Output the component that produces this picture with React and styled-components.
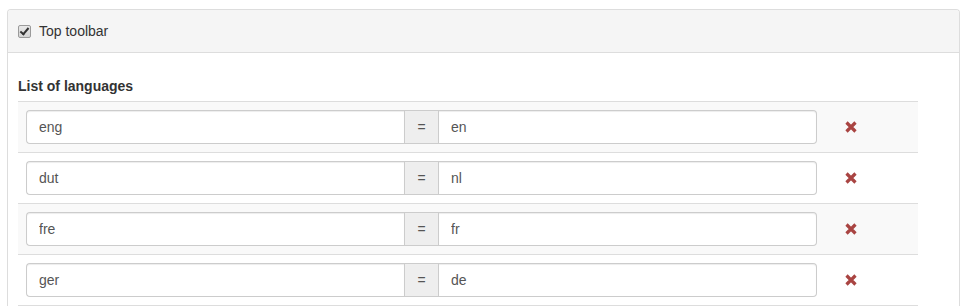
import React from 'react';
import styled, { createGlobalStyle } from 'styled-components';

const GlobalStyle = createGlobalStyle`
  body {
    margin: 0;
    background: #fff;
    font-family: "Liberation Sans", Arial, sans-serif;
    font-size: 14px;
    color: #333;
  }
`;

const Page = styled.div`
  padding: 9px 8px 0 7px;
`;

const Panel = styled.div`
  border: 1px solid #ddd;
  border-radius: 4px 4px 0 0;
  border-bottom: none;
  background: #fff;
`;

const PanelHeading = styled.div`
  display: flex;
  align-items: center;
  gap: 8px;
  padding: 11px 10px 11px 10px;
  line-height: 20px;
  background: #f5f5f5;
  border-bottom: 1px solid #ddd;
  border-radius: 3px 3px 0 0;
`;

const Check = styled.input`
  appearance: none;
  margin: 0;
  width: 13px;
  height: 13px;
  box-sizing: border-box;
  border: 1px solid #9a9a9a;
  border-radius: 2px;
  background: linear-gradient(#e8e8e8, #d4d4d4);
  position: relative;

  &:checked::after {
    content: '';
    position: absolute;
    left: 3px;
    top: 0px;
    width: 3px;
    height: 7px;
    border: solid #333;
    border-width: 0 2px 2px 0;
    transform: rotate(40deg);
  }
`;

const PanelBody = styled.div`
  padding: 23px 10px 0 10px;
`;

const Label = styled.div`
  font-weight: bold;
  line-height: 20px;
  margin-bottom: 5px;
`;

const Table = styled.table`
  width: 900px;
  border-collapse: collapse;
  border-spacing: 0;
  border-bottom: 1px solid #ddd;
`;

const Row = styled.tr`
  background: ${(p) => (p.$striped ? '#f9f9f9' : 'transparent')};
`;

const Cell = styled.td`
  padding: 8px;
  border-top: 1px solid #ddd;
  vertical-align: middle;
  width: ${(p) => p.$width || 'auto'};
`;

const InputGroup = styled.div`
  display: flex;
  height: 34px;
`;

const Field = styled.input`
  flex: 1;
  min-width: 0;
  height: 34px;
  box-sizing: border-box;
  padding: 6px 12px;
  font-family: "Liberation Sans", Arial, sans-serif;
  font-size: 14px;
  color: #555;
  background: #fff;
  border: 1px solid #ccc;
  border-radius: ${(p) => (p.$side === 'left' ? '4px 0 0 4px' : '0 4px 4px 0')};
  ${(p) => (p.$side === 'left' ? 'border-right: 0;' : 'border-left: 0;')}
  box-shadow: inset 0 1px 1px rgba(0, 0, 0, 0.075);
  outline: none;
`;

const Addon = styled.span`
  width: 35px;
  box-sizing: border-box;
  display: flex;
  align-items: center;
  justify-content: center;
  background: #eee;
  border: 1px solid #ccc;
  color: #555;
  font-size: 14px;
`;

const RemoveButton = styled.a`
  display: inline-flex;
  align-items: center;
  padding: 6px 12px;
  color: #a94442;
  cursor: pointer;
`;

const RemoveIcon = () => (
  <svg width="12" height="12" viewBox="0 0 12 12">
    <path
      d="M1.5 1.5 L10.5 10.5 M10.5 1.5 L1.5 10.5"
      stroke="#a94442"
      strokeWidth="3.2"
      strokeLinecap="butt"
      fill="none"
    />
  </svg>
);

const languages = [
  ['eng', 'en'],
  ['dut', 'nl'],
  ['fre', 'fr'],
  ['ger', 'de'],
];

export default function App() {
  return (
    <Page>
      <GlobalStyle />
      <Panel>
        <PanelHeading>
          <Check type="checkbox" defaultChecked />
          <span>Top toolbar</span>
        </PanelHeading>
        <PanelBody>
          <Label>List of languages</Label>
          <Table>
            <tbody>
              {languages.map(([code, iso], i) => (
                <Row key={code} $striped={i % 2 === 0}>
                  <Cell $width="791px">
                    <InputGroup>
                      <Field $side="left" defaultValue={code} />
                      <Addon>=</Addon>
                      <Field $side="right" defaultValue={iso} />
                    </InputGroup>
                  </Cell>
                  <Cell>
                    <RemoveButton>
                      <RemoveIcon />
                    </RemoveButton>
                  </Cell>
                </Row>
              ))}
            </tbody>
          </Table>
        </PanelBody>
      </Panel>
    </Page>
  );
}
